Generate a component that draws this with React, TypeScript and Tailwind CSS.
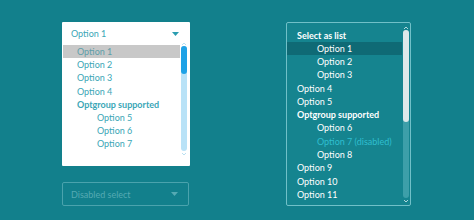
import React from "react";

const leftItems: { label: string; group?: boolean; indent?: boolean; selected?: boolean }[] = [
  { label: "Option 1", selected: true },
  { label: "Option 2" },
  { label: "Option 3" },
  { label: "Option 4" },
  { label: "Optgroup supported", group: true },
  { label: "Option 5", indent: true },
  { label: "Option 6", indent: true },
  { label: "Option 7", indent: true },
];

const rightItems: { label: string; group?: boolean; indent?: boolean; selected?: boolean; disabled?: boolean }[] = [
  { label: "Select as list", group: true },
  { label: "Option 1", indent: true, selected: true },
  { label: "Option 2", indent: true },
  { label: "Option 3", indent: true },
  { label: "Option 4" },
  { label: "Option 5" },
  { label: "Optgroup supported", group: true },
  { label: "Option 6", indent: true },
  { label: "Option 7 (disabled)", indent: true, disabled: true },
  { label: "Option 8", indent: true },
  { label: "Option 9" },
  { label: "Option 10" },
  { label: "Option 11" },
];

function Caret({ color }: { color: string }) {
  return (
    <svg width="7" height="4" viewBox="0 0 7 4">
      <path d="M0 0 L7 0 L3.5 4 Z" fill={color} />
    </svg>
  );
}

function Chevron({ up, color }: { up?: boolean; color: string }) {
  return (
    <svg width="6" height="4" viewBox="0 0 6 4">
      <path d={up ? "M1 3 L3 1 L5 3" : "M1 1 L3 3 L5 1"} stroke={color} strokeWidth="0.8" fill="none" />
    </svg>
  );
}

export default function App() {
  return (
    <div
      className="w-[474px] h-[220px] bg-[#12808c] flex overflow-hidden"
      style={{ fontFamily: "Lato, 'Noto Sans', sans-serif" }}
    >
      {/* Left column */}
      <div className="ml-[62px] mt-[22px] flex flex-col">
        <div className="w-[128px] h-[144px] bg-white flex flex-col rounded-[1px]">
          <div className="h-[15px] mt-[4px] flex items-center justify-between pl-[9px] pr-[11px]">
            <span className="text-[9px] text-[#3aa6b6] leading-none">Option 1</span>
            <Caret color="#2a9db0" />
          </div>
          <div className="flex h-[115px] pl-[1px] pr-[3px]">
            <div className="flex-1 flex flex-col pt-[4px] pb-[4px]">
              <div className="flex-1 flex flex-col overflow-hidden">
                {leftItems.map((it, i) => (
                  <div
                    key={i}
                    className={
                      "h-[13.2px] shrink-0 flex items-center text-[9px] leading-none " +
                      (it.selected ? "bg-[#c8c8c8] text-[#5d9ea8] " : "text-[#3aa6b6] ") +
                      (it.group ? "font-bold " : "") +
                      (it.indent ? "pl-[34px]" : "pl-[14px]")
                    }
                  >
                    {it.label}
                  </div>
                ))}
              </div>
            </div>
            <div className="w-[7px] flex flex-col items-center">
              <div className="h-[5px] flex items-center">
                <Chevron up color="#a8d8ee" />
              </div>
              <div className="flex-1 w-[6px] rounded-[3px] bg-[#b9e2f7] flex flex-col">
                <div className="h-[28px] w-[6px] rounded-[3px] bg-[#1fa2e6]" />
              </div>
              <div className="h-[5px] flex items-center">
                <Chevron color="#a8d8ee" />
              </div>
            </div>
          </div>
        </div>
        <div className="mt-[16px] w-[127px] h-[24px] border border-[#4aa3ad] rounded-[2px] flex items-center justify-between pl-[8px] pr-[10px]">
          <span className="text-[9px] text-[#55aab3] leading-none">Disabled select</span>
          <Caret color="#55aab3" />
        </div>
      </div>

      {/* Right column */}
      <div className="ml-[96px] mt-[22px]">
        <div className="w-[125px] h-[184px] border border-[#70c0c8] rounded-[2px] bg-[#15848f] flex pr-[1px]">
          <div className="flex-1 flex flex-col pt-[5.5px] overflow-hidden">
            {rightItems.map((it, i) => (
              <div
                key={i}
                className={
                  "h-[13.27px] shrink-0 flex items-center text-[9px] leading-none " +
                  (it.selected ? "bg-[#0f6a75] " : "") +
                  (it.disabled ? "text-[#2fbfcf] " : "text-white ") +
                  (it.group ? "font-bold " : "") +
                  (it.indent ? "pl-[30px]" : "pl-[10px]")
                }
              >
                {it.label}
              </div>
            ))}
          </div>
          <div className="w-[7px] flex flex-col items-center py-[2px]">
            <div className="h-[5px] flex items-center">
              <Chevron up color="#d8eef0" />
            </div>
            <div className="flex-1 w-[6px] rounded-[3px] bg-[#3d9fa9] flex flex-col">
              <div className="h-[92px] w-[6px] rounded-[3px] bg-[#dde9ea]" />
            </div>
            <div className="h-[5px] flex items-center">
              <Chevron color="#d8eef0" />
            </div>
          </div>
        </div>
      </div>
    </div>
  );
}
